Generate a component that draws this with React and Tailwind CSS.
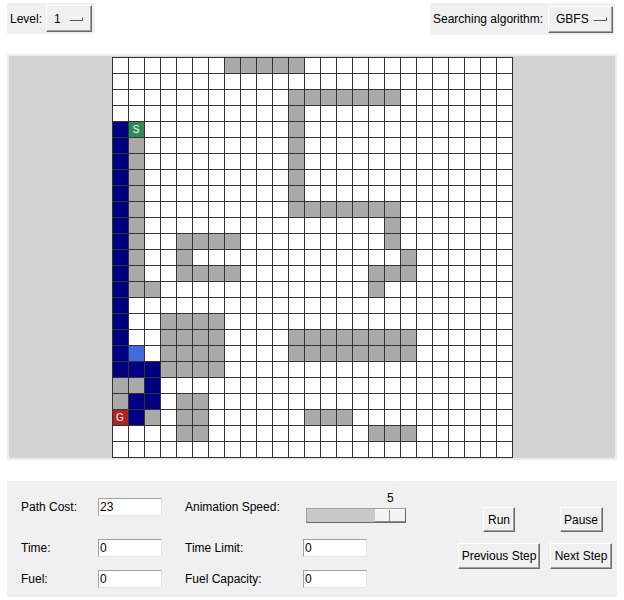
import React from "react";

const GRID = [
  ".......#####.............",
  ".........................",
  "...........#######.......",
  "...........#.............",
  "NS.........#.............",
  "N#.........#.............",
  "N#.........#.............",
  "N#.........#.............",
  "N#.........#.............",
  "N#.........#######.......",
  "N#...............#.......",
  "N#..####.........#.......",
  "N#..#.............#......",
  "N#..####........###......",
  "N##.............#........",
  "N........................",
  "N..####..................",
  "N..####....########......",
  "NB.####....########......",
  "NNN####..................",
  "##N......................",
  "#NN.##...................",
  "GN#.##......###..........",
  "....##..........###......",
  ".........................",
];

const cellColor = {
  ".": "bg-white",
  "#": "bg-[#a9a9a9]",
  N: "bg-[#000080]",
  B: "bg-[#4169e1]",
  S: "bg-[#2e8b57]",
  G: "bg-[#b22222]",
};

const raised =
  "border border-t-white border-l-white border-r-[#696969] border-b-[#696969] shadow-[inset_-1px_-1px_0_#a0a0a0]";

function OptionMenu({ value, width, pad }) {
  return (
    <div
      className={`${raised} ${width} ${pad} h-[27px] bg-[#f0f0f0] flex items-center justify-between pl-[7px]`}
    >
      <span className="text-[12px] leading-none">{value}</span>
      <div className="w-[14px] h-[4px] bg-[#f0f0f0] border border-t-white border-l-white border-r-[#5a5a5a] border-b-[#5a5a5a]" />
    </div>
  );
}

function Entry({ value }) {
  return (
    <div className="w-[64px] h-[18px] bg-white border border-t-[#a0a0a0] border-l-[#a0a0a0] border-r-[#e3e3e3] border-b-[#e3e3e3] pl-[1px] text-[12px] leading-[16px]">
      {value}
    </div>
  );
}

function Button({ label, width, height }) {
  return (
    <div
      className={`${raised} ${width} ${height} bg-[#f0f0f0] flex items-center justify-center text-[12px] leading-none`}
    >
      {label}
    </div>
  );
}

export default function App() {
  return (
    <div className="w-[624px] h-[600px] bg-white px-[7px] pt-[3px] text-black font-['Liberation_Sans',Arial,sans-serif]">
      {/* top controls */}
      <div className="flex justify-between h-[31px]">
        <div className="w-[88px] h-[31px] bg-[#f0f0f0] flex items-center pl-[3px]">
          <span className="w-[36px] text-[12px]">Level:</span>
          <OptionMenu value="1" width="w-[46px]" pad="pr-[8px]" />
        </div>
        <div className="w-[185px] h-[32px] mr-[2px] bg-[#f0f0f0] flex items-center pl-[3px]">
          <span className="w-[115px] text-[12px]">Searching algorithm:</span>
          <OptionMenu value="GBFS" width="w-[65px]" pad="pr-[5px]" />
        </div>
      </div>

      {/* map canvas */}
      <div className="mt-[20px] h-[406px] border-2 border-[#ebebeb] bg-[#d3d3d3] flex justify-center pt-[1px]">
        <div className="grid grid-cols-[repeat(25,16px)] self-start border-l border-t border-[#333]">
          {GRID.flatMap((row, r) =>
            row.split("").map((c, i) => (
              <div
                key={`${r}-${i}`}
                className={`w-[16px] h-[16px] border-r border-b border-[#333] ${cellColor[c]} flex items-center justify-center text-white text-[10px] leading-none`}
              >
                {c === "S" || c === "G" ? c : null}
              </div>
            ))
          )}
        </div>
      </div>

      {/* bottom panel */}
      <div className="mt-[21px] h-[116px] bg-[#f0f0f0] flex pt-[7px] pl-[14px]">
        <div className="grid grid-cols-[77px_87px_118px_110px] grid-rows-[38px_44px_18px] items-center text-[12px]">
          <span>Path Cost:</span>
          <Entry value="23" />
          <span>Animation Speed:</span>
          <div className="flex flex-col w-[100px] ml-[3px]">
            <div className="h-[14px] leading-[14px] pl-[81px]">5</div>
            <div className="mt-[3px] h-[15px] bg-[#c8c8c8] border border-t-[#a0a0a0] border-l-[#a0a0a0] border-r-[#696969] border-b-[#696969] flex justify-end">
              <div className="w-[30px] h-full flex bg-[#f4f4f4] border-t border-white border-b border-b-[#8a8a8a]">
                <div className="w-[15px] border-r border-[#8a8a8a]" />
                <div className="w-[15px]" />
              </div>
            </div>
          </div>

          <span>Time:</span>
          <Entry value="0" />
          <span>Time Limit:</span>
          <Entry value="0" />

          <span>Fuel:</span>
          <Entry value="0" />
          <span>Fuel Capacity:</span>
          <Entry value="0" />
        </div>

        <div className="ml-auto mt-[19px] self-start grid grid-cols-[92px_72px] gap-y-[11px] justify-items-center">
          <Button label="Run" width="w-[32px]" height="h-[25px]" />
          <Button label="Pause" width="w-[43px]" height="h-[25px]" />
          <Button label="Previous Step" width="w-[82px]" height="h-[26px]" />
          <Button label="Next Step" width="w-[62px]" height="h-[26px]" />
        </div>
      </div>
    </div>
  );
}
